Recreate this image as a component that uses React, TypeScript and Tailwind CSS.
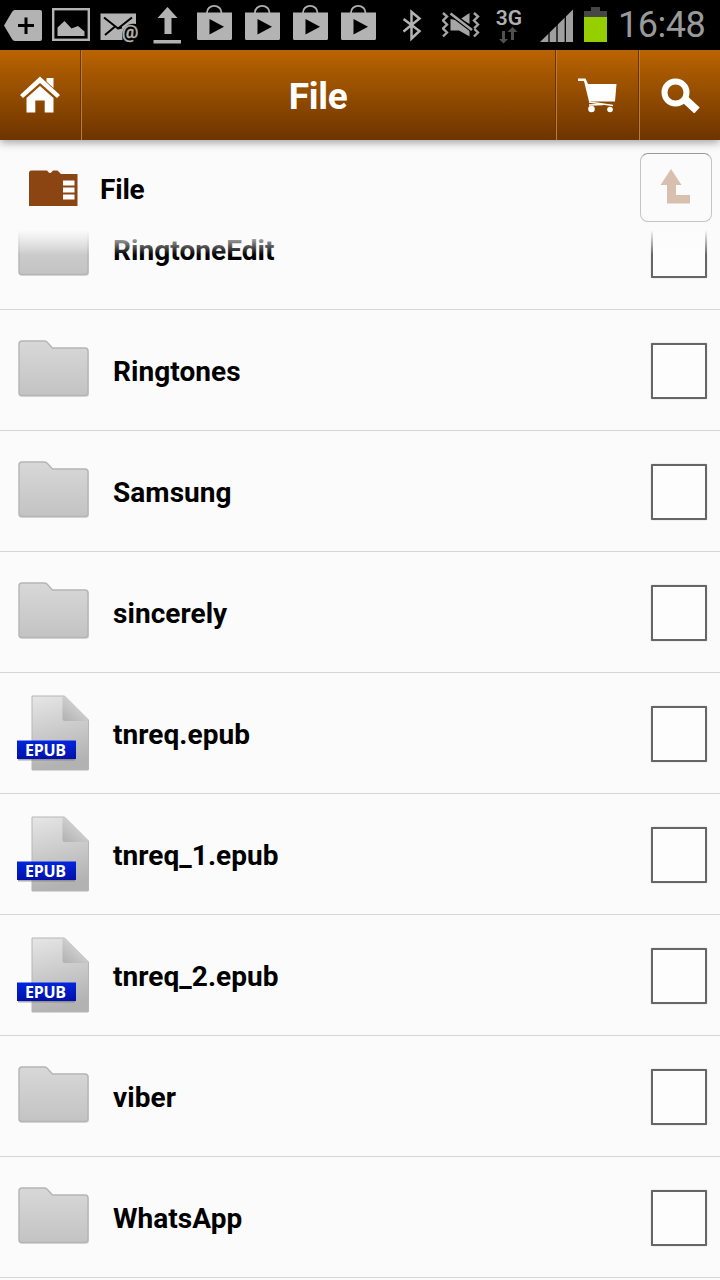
import React from "react";

const rows = [
  { name: "RingtoneEdit", type: "folder" },
  { name: "Ringtones", type: "folder" },
  { name: "Samsung", type: "folder" },
  { name: "sincerely", type: "folder" },
  { name: "tnreq.epub", type: "epub" },
  { name: "tnreq_1.epub", type: "epub" },
  { name: "tnreq_2.epub", type: "epub" },
  { name: "viber", type: "folder" },
  { name: "WhatsApp", type: "folder" },
];

function BagIcon({ className }: { className: string }) {
  return (
    <svg className={className} width="36" height="50" viewBox="0 0 36 50">
      <path d="M11 14V12.5a7.200 6.700 0 0 1 14.400 0V14" fill="none" stroke="#b0b0b0" strokeWidth="1.8" />
      <path fillRule="evenodd" fill="#b3b3b3" d="M1 12.5h35V38.500q0 1.500-1.500 1.500h-32Q1 40 1 38.500zM13.500 19v15.500L28 26.700z" />
    </svg>
  );
}

function StatusBar() {
  return (
    <div className="flex h-[50px] items-start bg-black pl-1">
      <svg width="38" height="50" viewBox="4 0 38 50">
        <path fill="#b3b3b3" d="M4 25.500 12 12q1.200-2 3-2h25q2 0 2 2v27q0 2-2 2H15q-2 0-3-2z" />
        <path stroke="#000" strokeWidth="3" d="M18 25.500h16M26 17.500v16.500" />
      </svg>
      <svg className="ml-2.5" width="38" height="50" viewBox="52 0 38 50">
        <rect x="53.200" y="9.200" width="35.600" height="30.600" fill="none" stroke="#b3b3b3" strokeWidth="2.400" />
        <path fill="#b3b3b3" d="M57.500 36v-8.500l7-6.500 7 7.500 6.500-2.500 6.500 5.500V36z" />
      </svg>
      <svg className="ml-2.5" width="40" height="50" viewBox="100 0 40 50">
        <path fill="#b3b3b3" d="M100.500 13.500h35.500V24q-4-1-8 1-5 3-6 9l.5 6h-22z" />
        <path fill="none" stroke="#000" strokeWidth="2" d="m104 17.500 14 11 14-11M105 35l9.500-8M118 28.500l4-1" />
        <text x="130" y="38" textAnchor="middle" fill="#b3b3b3" stroke="#b3b3b3" strokeWidth="0.400" fontFamily="Roboto, sans-serif" fontWeight="500" fontSize="18.500">@</text>
      </svg>
      <svg className="ml-[13px]" width="28" height="50" viewBox="153 0 28 50">
        <path fill="#b3b3b3" d="M167.500 7 177.500 18H171.500v16h-7V18h-7zM153.500 40h27.500v3.500h-27.500z" />
      </svg>
      <BagIcon className="ml-[15px]" />
      <BagIcon className="ml-3" />
      <BagIcon className="ml-3" />
      <BagIcon className="ml-3" />
      <svg className="ml-[27px]" width="19" height="50" viewBox="403 0 19 50">
        <path fill="none" stroke="#b3b3b3" strokeWidth="2.500" d="m403.500 19 16 12-8 7.500V12l8 6.500-16 13" />
      </svg>
      <svg className="ml-5" width="38" height="50" viewBox="442 0 38 50">
        <path fill="none" stroke="#a6a6a6" strokeWidth="2.400" d="m443 13 4 3.500-4 4 4 4-4 4 4 4-4 4M474 13l4 3.500-4 4 4 4-4 4 4 4-4 4" />
        <path fill="#a6a6a6" d="M469.500 13v11L460.500 19zM450.500 19l5 1 14 10.500v6L459 30.500h-8.500z" />
        <path stroke="#000" strokeWidth="5" d="m450 13 23 17.500" />
        <path stroke="#a6a6a6" strokeWidth="2.600" d="m450.500 13.500 21.500 16.500" />
      </svg>
      <div className="ml-[14px] flex w-[30px] flex-col items-center pt-[7px] font-[Roboto,sans-serif]">
        <span className="text-[21px] leading-[22px] font-semibold text-[#b0b0b0]">3G</span>
        <svg className="-mt-0.5" width="22" height="17" viewBox="0 0 22 17">
          <path fill="#505050" d="M4 4h3v8h3l-4.500 4.500L1 12h3zM13 13h3V5h3.500L14.500 0 9.500 5H13z" />
        </svg>
      </div>
      <svg className="ml-4" width="34" height="50" viewBox="540 0 34 50">
        <path fill="#a0a0a0" d="M540 42 573 9.500V42z" />
        <path stroke="#000" strokeWidth="1.300" d="M549 30v13M557 20v23M565.300 12v31" />
      </svg>
      <svg className="ml-[10px]" width="23" height="50" viewBox="584 0 23 50">
        <path fill="#464646" d="M591 7h9v4h7v7h-23v-7h7z" />
        <path fill="#96cf00" d="M584 17h23v25h-23z" />
      </svg>
      <span className="ml-[11px] font-[Roboto,sans-serif] text-[36px] leading-[50px] tracking-[-0.5px] text-[#9a9a9a]">16:48</span>
    </div>
  );
}

function Header() {
  return (
    <div className="relative z-20 flex h-[90px] bg-linear-to-b from-[#b96400] to-[#6e3500] shadow-[0_2px_9px_rgba(0,0,0,0.4)]">
      <div className="flex w-[81px] items-center border-r border-[#6b3300] pl-5">
        <svg width="40" height="38" viewBox="0 0 40 38">
          <path fill="#fff" d="M26.500 2h7v10l-7-6.500zM20 0.500 40 19l-3 3L20 7 3 22l-3-3zM20 10l13.500 12v14.500h-8.800V24.500h-9.400v12H6.500V22z" />
        </svg>
      </div>
      <div className="flex flex-1 items-center justify-center border-l border-[#bd7c35] pr-[2px] font-[Roboto,sans-serif] text-[37px] font-bold tracking-[-0.3px] text-white">
        <span className="pt-1">File</span>
      </div>
      <div className="flex w-[83px] items-center border-l border-[#bd7c35] pl-[21px] shadow-[-1px_0_0_#6b3300]">
        <svg width="39" height="36" viewBox="0 0 39 36">
          <path fill="#fff" d="M0 1.500h7.500L10 7h28.500l-1.500 17.500H11L6 4H0z" />
          <path stroke="#fff" strokeWidth="1.300" d="m11 25 24 3.500M11 28l14-.5" />
          <circle cx="13.500" cy="32" r="3.300" fill="#fff" />
          <circle cx="32" cy="32.500" r="2.800" fill="#fff" />
        </svg>
      </div>
      <div className="flex w-[81px] items-center border-l border-[#bd7c35] pl-[21px] shadow-[-1px_0_0_#6b3300]">
        <svg width="40" height="36" viewBox="0 0 40 36">
          <circle cx="14.500" cy="15.500" r="11" fill="none" stroke="#fff" strokeWidth="6" />
          <path stroke="#fff" strokeWidth="8" d="m22 20.500 14 13" />
        </svg>
      </div>
    </div>
  );
}

function FolderIcon() {
  return (
    <svg className="ml-px mt-0.5" width="75" height="76" viewBox="0 0 75 76">
      <defs>
        <linearGradient id="folder" x1="0" y1="0" x2="0" y2="1">
          <stop offset="0" stopColor="#d8d8d8" />
          <stop offset="1" stopColor="#c3c3c3" />
        </linearGradient>
      </defs>
      <path d="M3 12q0-3 3-3h22q2 0 3 1l5 6h34q3 0 3 3v42q0 3-3 3H6q-3 0-3-3z" fill="#dedede" />
      <path d="M3 11q0-3 3-3h22q2 0 3 1l5.500 6H69q3 0 3 3v42q0 2.500-3 2.500H6q-3 0-3-2.500z" fill="url(#folder)" stroke="#b5b5b5" strokeWidth="1.400" />
    </svg>
  );
}

function EpubIcon() {
  return (
    <svg width="76" height="78" viewBox="0 0 76 78">
      <defs>
        <linearGradient id="page" x1="0" y1="0" x2="0.200" y2="1">
          <stop offset="0" stopColor="#e6e6e6" />
          <stop offset="1" stopColor="#b2b2b2" />
        </linearGradient>
        <linearGradient id="fold" x1="0" y1="1" x2="0.600" y2="0.300">
          <stop offset="0" stopColor="#b0b0b0" />
          <stop offset="1" stopColor="#d2d2d2" />
        </linearGradient>
        <linearGradient id="label" x1="0" y1="0" x2="0" y2="1">
          <stop offset="0" stopColor="#0026e0" />
          <stop offset="1" stopColor="#0010a8" />
        </linearGradient>
      </defs>
      <path d="M17 2h32.500l24 24v49.500q0 .5-.5.500H17z" fill="url(#page)" stroke="#b5b5b5" />
      <path d="M47.500 2.500H49.500L73.500 26v1H50q-2.500 0-2.500-2.500z" fill="url(#fold)" />
      <path d="M3 65h57v1.500H3z" fill="#777" opacity="0.600" />
      <path d="M2 46.500h59v18.500h-59z" fill="url(#label)" />
      <text x="30.500" y="61.500" textAnchor="middle" textLength="41" fill="#fff" fontFamily="Open Sans, sans-serif" fontWeight="700" fontSize="16">EPUB</text>
    </svg>
  );
}

function Toolbar() {
  return (
    <div className="flex h-[90px] items-start">
      <svg className="mt-[29px] ml-[29px]" width="49" height="38" viewBox="0 0 49 38">
        <path fill="#8b4513" d="M0 4q0-2.500 2.500-2.500h15.500q2 2.500 3 2.500t3-2.500h4.500L32 5h16.500v32H0z" />
        <path fill="#fff" d="M34 11.500h11.500v5H34zM34 18.500h11.500v5H34zM34 25.500h11.500v5H34z" />
      </svg>
      <span className="mt-[34px] ml-[22px] text-[28px] leading-8 font-bold tracking-[-0.2px]">File</span>
      <div className="mt-[13px] mr-2 ml-auto flex h-[69px] w-[72px] items-center justify-center rounded-lg border-[1.5px] border-[#c4c4c4] border-t-[#999]">
        <svg className="mr-[2px] mb-[2px]" width="31" height="35" viewBox="0 0 31 35">
          <path fill="#d9bfae" d="M11 0 21.500 16H16v10h14v8.500H7V16H0.500z" />
        </svg>
      </div>
    </div>
  );
}

function App() {
  return (
    <div className="flex h-[1280px] w-[720px] flex-col overflow-hidden bg-[#fbfbfb] font-[Roboto,sans-serif] text-black">
      <StatusBar />
      <Header />
      <Toolbar />
      <div className="relative flex-1 overflow-hidden">
        <div className="-mt-[41px]">
          {rows.map((row) => (
            <div key={row.name} className="flex h-[121px] items-center border-b border-[#d6d6d6] pr-[13px] pl-[15px]">
              {row.type === "folder" ? <FolderIcon /> : <EpubIcon />}
              <span className="ml-[22px] flex-1 pt-1 text-[28px] leading-8 font-bold tracking-[0.05px]">{row.name}</span>
              <div className="mt-[2px] h-[56px] w-[56px] rounded-[1px] border-2 border-[#666] bg-[#fdfdfd] shadow-[0_0_1px_#888]"></div>
            </div>
          ))}
        </div>
        {/* fade under the toolbar */}
        <div className="absolute inset-x-0 top-0 h-[25px] bg-linear-to-b from-[#fbfbfb] to-[#fbfbfb]/0"></div>
      </div>
    </div>
  );
}

export default App;
